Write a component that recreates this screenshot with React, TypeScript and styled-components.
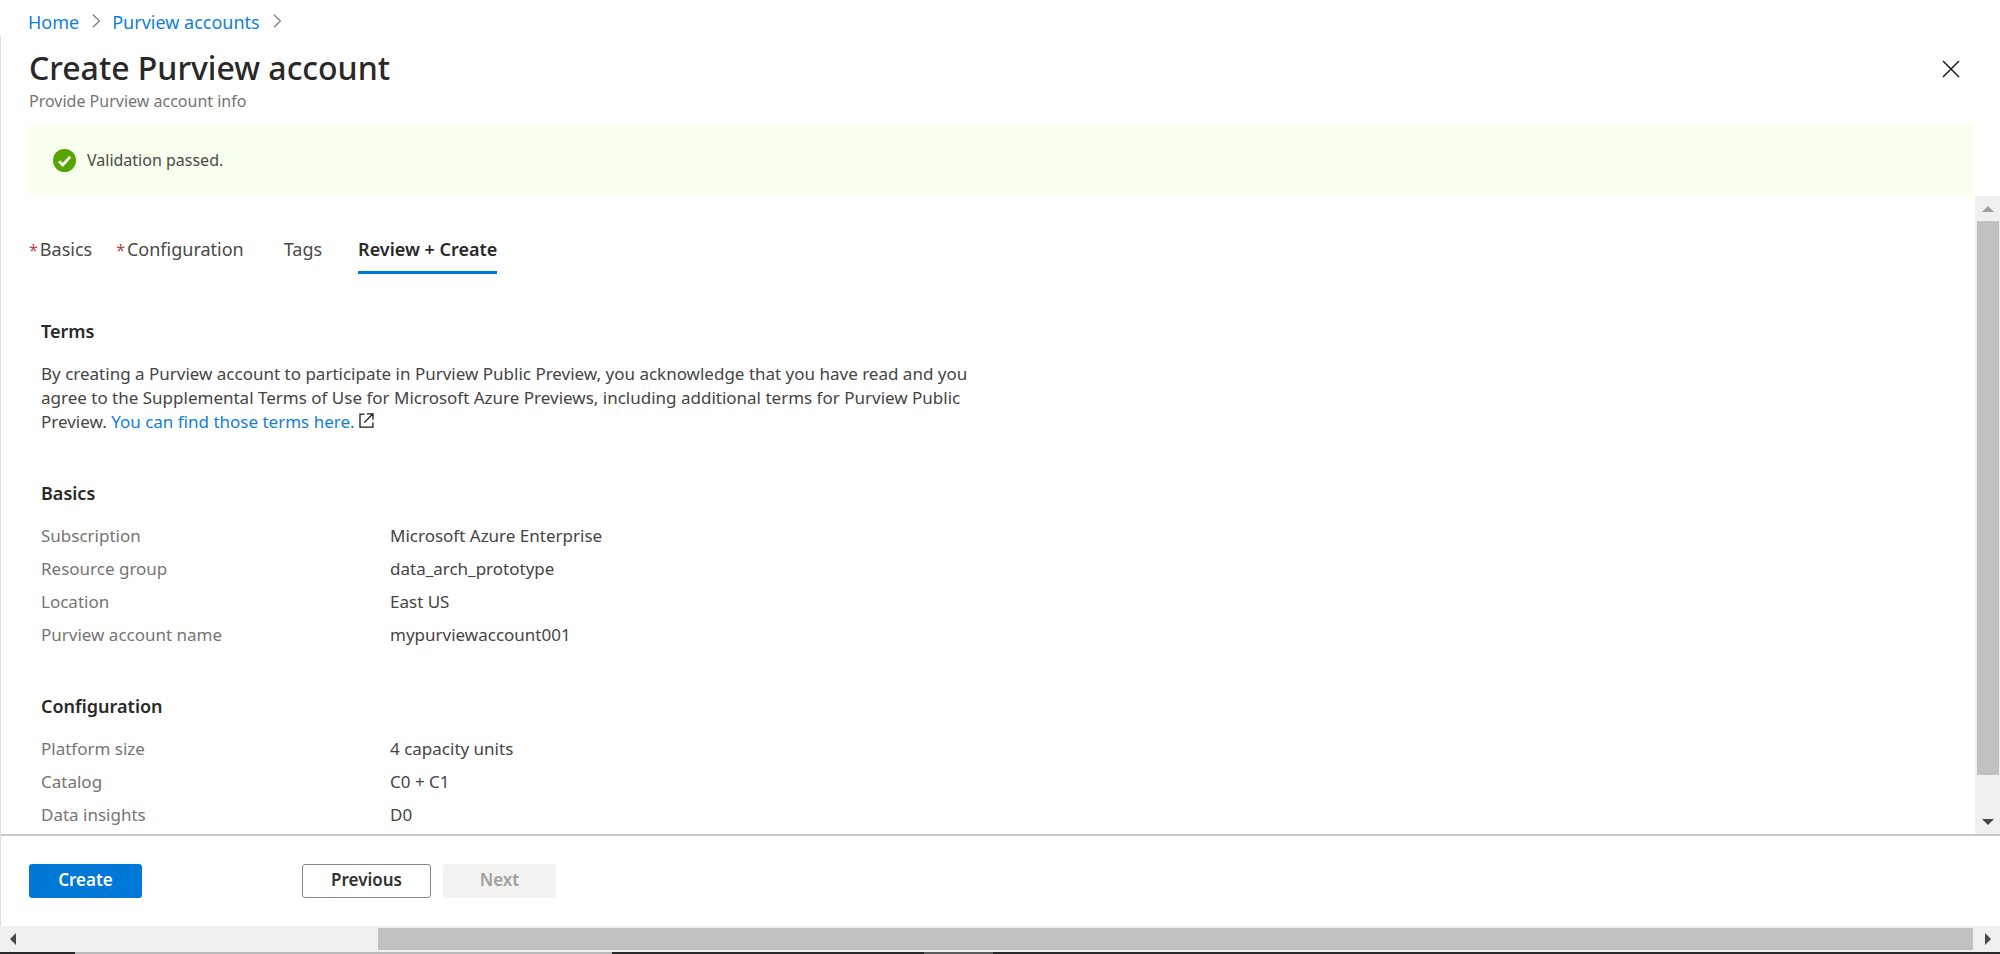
import React from "react";
import styled, { createGlobalStyle, css } from "styled-components";

const GlobalStyle = createGlobalStyle`
  *, *::before, *::after { box-sizing: border-box; }
  body {
    margin: 0;
    background: #ffffff;
    color: #454443;
    font-family: "Noto Sans", "Open Sans", sans-serif;
    font-size: 17px;
    line-height: 24px;
  }
  h1, h2, p, dl, dd, ol { margin: 0; padding: 0; }
  button { font-family: inherit; cursor: pointer; }
`;

const Page = styled.div`
  display: flex;
  flex-direction: column;
  height: 100vh;
  overflow: hidden;
`;

const Breadcrumb = styled.nav`
  flex: none;
  padding: 10px 28px 2px;
  font-size: 18px;

  ol {
    display: flex;
    align-items: center;
    list-style: none;
  }
  li {
    display: flex;
    align-items: center;
  }
  svg {
    margin: 0 11px 2px 13px;
  }
`;

const Link = styled.a`
  color: #0f7fdb;
  text-decoration: none;
`;

const Blade = styled.main`
  flex: 1;
  min-height: 0;
  display: flex;
  flex-direction: column;
  border-left: 1px solid #dcdcdc;
`;

const Header = styled.header`
  display: flex;
  justify-content: space-between;
  align-items: flex-start;
  flex: none;
  padding: 12px 36px 12px 28px;
`;

const Title = styled.h1`
  margin-bottom: 1px;
  font-size: 32px;
  line-height: 40px;
  font-weight: 500;
  color: #292827;
`;

const Subtitle = styled.p`
  font-size: 16px;
  line-height: 24px;
  color: #767472;
`;

const CloseButton = styled.button`
  display: flex;
  margin-top: 8px;
  padding: 4px;
  border: 0;
  background: none;
`;

const Banner = styled.div`
  display: flex;
  align-items: center;
  gap: 11px;
  flex: none;
  height: 70px;
  margin: 0 27px 0 28px;
  padding: 0 24px;
  border-radius: 3px;
  background: #f8ffee;
  font-size: 16px;
  color: #4a4948;
`;

const ScrollArea = styled.div`
  flex: 1;
  min-height: 0;
  display: flex;
  margin-top: 1px;
`;

const Content = styled.div`
  flex: 1;
  min-width: 0;
  overflow: hidden;
  padding: 33px 28px 0;
`;

const Tabs = styled.div`
  display: flex;
  align-items: flex-start;
`;

const Tab = styled.button<{ $active?: boolean; $gap: number }>`
  margin: 0 ${(p) => p.$gap}px 0 0;
  padding: 8px 0 10px;
  border: 0;
  border-bottom: 3px solid ${(p) => (p.$active ? "#0078d7" : "transparent")};
  background: none;
  color: ${(p) => (p.$active ? "#292827" : "#4a4948")};
  font-size: 18px;
  line-height: 24px;
  font-weight: ${(p) => (p.$active ? 600 : 400)};
`;

const Required = styled.span`
  margin-right: 2px;
  font-size: 16px;
  color: #b9434c;
`;

const Section = styled.section`
  padding: 0 12px;
  margin-top: 47px;

  &:first-of-type { margin-top: 44px; }
`;

const SectionTitle = styled.h2`
  margin-bottom: 19px;
  font-size: 18px;
  line-height: 24px;
  font-weight: 600;
  color: #292827;
`;

const Terms = styled.p`
  max-width: 950px;
  line-height: 24px;
`;

const Details = styled.dl`
  display: grid;
  grid-template-columns: 349px 1fr;
  row-gap: 9px;

  dt { color: #767472; }
`;

const Footer = styled.footer`
  display: flex;
  flex: none;
  padding: 28px;
  border-top: 2px solid #c8c8c8;
`;

const Action = styled.button<{ $kind: "primary" | "outline" | "disabled" }>`
  width: 113px;
  height: 34px;
  padding: 0 0 2px;
  border: 1px solid transparent;
  border-radius: 3px;
  font-size: 17px;
  line-height: 24px;
  font-weight: 600;
  ${(p) =>
    p.$kind === "primary" &&
    css`
      margin-right: 160px;
      background: #0078d7;
      color: #ffffff;
    `}
  ${(p) =>
    p.$kind === "outline" &&
    css`
      width: 129px;
      margin-right: 12px;
      border-color: #8a8886;
      background: #ffffff;
      color: #323130;
    `}
  ${(p) =>
    p.$kind === "disabled" &&
    css`
      background: #f3f2f1;
      color: #a19f9d;
      cursor: default;
    `}
`;

const Track = styled.div<{ $vertical?: boolean }>`
  display: flex;
  flex: none;
  flex-direction: ${(p) => (p.$vertical ? "column" : "row")};
  background: #f0f0f0;
  ${(p) => (p.$vertical ? "width: 25px; padding: 0 1px 0 2px;" : "height: 26px; padding: 2px 0;")}
`;

const Arrow = styled.button`
  display: flex;
  flex: 0 0 25px;
  align-items: center;
  justify-content: center;
  padding: 0;
  border: 0;
  background: none;
`;

const Groove = styled.div<{ $before: number; $after: number }>`
  flex: 1;
  display: flex;
  flex-direction: inherit;

  &::before { content: ""; flex: ${(p) => p.$before}; }
  &::after { content: ""; flex: ${(p) => p.$after}; }
`;

const Thumb = styled.div<{ $size: number }>`
  flex: ${(p) => p.$size};
  background: #c1c1c1;
`;

const Taskbar = styled.div`
  display: grid;
  grid-template-columns: 75fr 537fr 312fr 69fr 1007fr;
  flex: none;
  height: 2px;
  background: #29292b;

  i:nth-child(2) { background: #b9b9b9; }
  i:nth-child(4) { background: #5c5c5c; }
`;

const Chevron = () => (
  <svg width="9" height="14" viewBox="0 0 9 14" fill="none" stroke="#7a7a7a" strokeWidth="1.2" aria-hidden="true">
    <path d="M1 .8 7.4 7 1 13.2" />
  </svg>
);

const CheckCircle = () => (
  <svg width="23" height="23" viewBox="0 0 23 23" aria-hidden="true">
    <circle cx="11.5" cy="11.5" r="11.5" fill="#57a300" />
    <path d="M6 12.2 9.8 16 17.2 7.6" fill="none" stroke="#ffffff" strokeWidth="2.8" />
  </svg>
);

const External = () => (
  <svg width="15" height="15" viewBox="0 0 15 15" fill="none" stroke="#1b1b1b" strokeWidth="1.3" aria-hidden="true">
    <path d="M5.5 1.2H1v12.9h12.9V9.5M8 .8h6v6M14 .8 5.2 9.6" />
  </svg>
);

type Direction = "up" | "down" | "left" | "right";
const arrowShapes: Record<Direction, [number, number, string]> = {
  up: [12, 6, "M6 0 12 6H0z"],
  down: [12, 6, "M0 0H12L6 6z"],
  left: [6, 12, "M6 0V12L0 6z"],
  right: [6, 12, "M0 0 6 6 0 12z"],
};

const ScrollArrow = ({ direction, color = "#484848" }: { direction: Direction; color?: string }) => {
  const [w, h, d] = arrowShapes[direction];
  return (
    <Arrow type="button" aria-label={`Scroll ${direction}`}>
      <svg width={w} height={h} viewBox={`0 0 ${w} ${h}`}>
        <path d={d} fill={color} />
      </svg>
    </Arrow>
  );
};

const basics = [
  ["Subscription", "Microsoft Azure Enterprise"],
  ["Resource group", "data_arch_prototype"],
  ["Location", "East US"],
  ["Purview account name", "mypurviewaccount001"],
];

const configuration = [
  ["Platform size", "4 capacity units"],
  ["Catalog", "C0 + C1"],
  ["Data insights", "D0"],
];

const Summary = ({ title, rows }: { title: string; rows: string[][] }) => (
  <Section>
    <SectionTitle>{title}</SectionTitle>
    <Details>
      {rows.map(([label, value]) => (
        <React.Fragment key={label}>
          <dt>{label}</dt>
          <dd>{value}</dd>
        </React.Fragment>
      ))}
    </Details>
  </Section>
);

export default function App() {
  return (
    <Page>
      <GlobalStyle />
      <Breadcrumb aria-label="Breadcrumb">
        <ol>
          <li>
            <Link href="#home">Home</Link>
            <Chevron />
          </li>
          <li>
            <Link href="#accounts">Purview accounts</Link>
            <Chevron />
          </li>
        </ol>
      </Breadcrumb>
      <Blade>
        <Header>
          <div>
            <Title>Create Purview account</Title>
            <Subtitle>Provide Purview account info</Subtitle>
          </div>
          <CloseButton type="button" aria-label="Close">
            <svg width="18" height="18" viewBox="0 0 18 18" stroke="#1b1b1b" strokeWidth="1.5">
              <path d="M1 1 17 17M17 1 1 17" />
            </svg>
          </CloseButton>
        </Header>
        <Banner role="status">
          <CheckCircle />
          Validation passed.
        </Banner>
        <ScrollArea>
          <Content>
            <Tabs role="tablist">
              <Tab role="tab" $gap={24}>
                <Required>*</Required>Basics
              </Tab>
              <Tab role="tab" $gap={40}>
                <Required>*</Required>Configuration
              </Tab>
              <Tab role="tab" $gap={36}>Tags</Tab>
              <Tab role="tab" aria-selected="true" $active $gap={0}>
                Review + Create
              </Tab>
            </Tabs>
            <Section>
              <SectionTitle>Terms</SectionTitle>
              <Terms>
                By creating a Purview account to participate in Purview Public Preview, you acknowledge that you have
                read and you agree to the Supplemental Terms of Use for Microsoft Azure Previews, including additional
                terms for Purview Public Preview. <Link href="#terms">You can find those terms here.</Link>{" "}
                <External />
              </Terms>
            </Section>
            <Summary title="Basics" rows={basics} />
            <Summary title="Configuration" rows={configuration} />
          </Content>
          <Track $vertical>
            <ScrollArrow direction="up" color="#a0a0a0" />
            <Groove $before={0} $after={34}>
              <Thumb $size={554} />
            </Groove>
            <ScrollArrow direction="down" />
          </Track>
        </ScrollArea>
        <Footer>
          <Action type="button" $kind="primary">Create</Action>
          <Action type="button" $kind="outline">Previous</Action>
          <Action type="button" $kind="disabled" disabled>Next</Action>
        </Footer>
      </Blade>
      <Track>
        <ScrollArrow direction="left" />
        <Groove $before={353} $after={2}>
          <Thumb $size={1595} />
        </Groove>
        <ScrollArrow direction="right" />
      </Track>
      <Taskbar aria-hidden="true">
        <i />
        <i />
        <i />
        <i />
        <i />
      </Taskbar>
    </Page>
  );
}
